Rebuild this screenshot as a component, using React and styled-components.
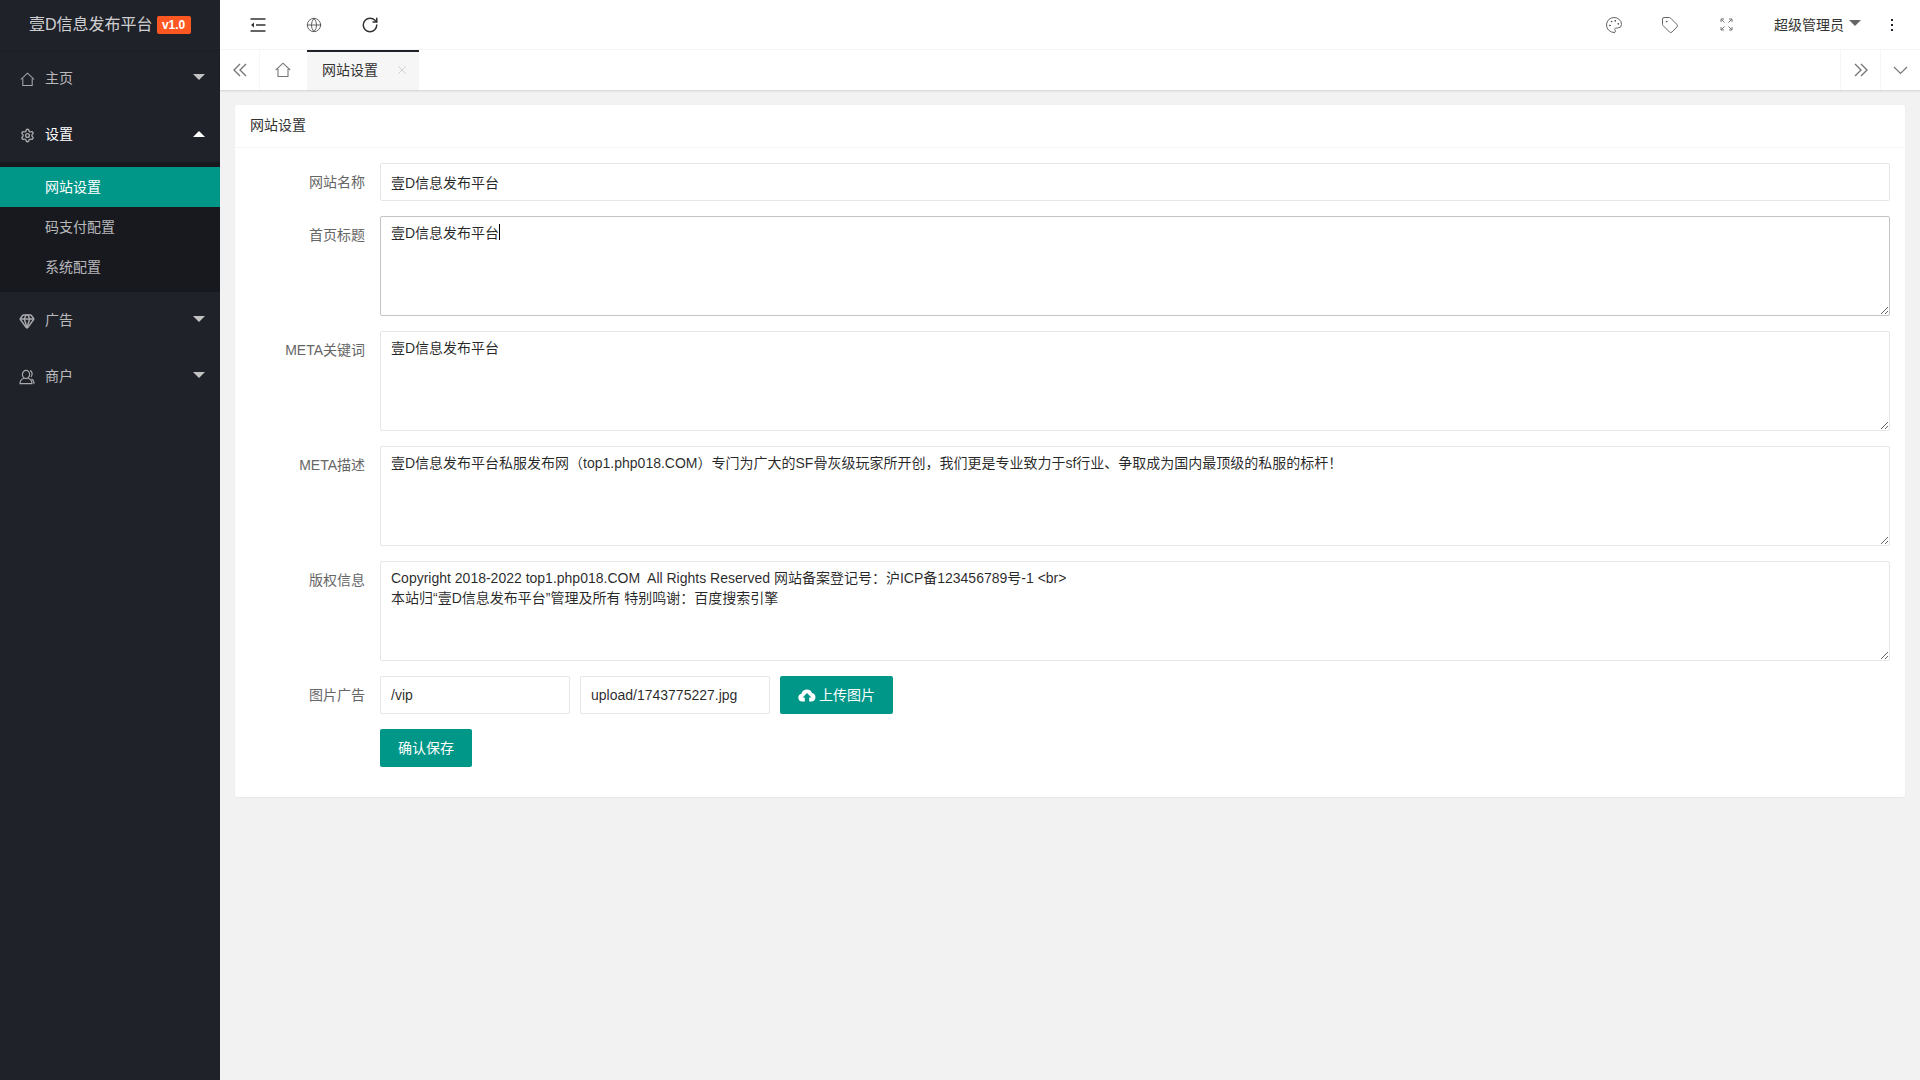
import React, { useEffect, useRef } from "react";
import styled, { createGlobalStyle } from "styled-components";
import { Globe, RotateCw, Palette, Tag, Settings, Gem, X } from "lucide-react";

const GlobalStyle = createGlobalStyle`
  html, body { margin: 0; padding: 0; height: 100%; overflow: hidden; }
  body {
    background: #f2f2f2;
    color: #333;
    font: 14px/20px "Liberation Sans", "Noto Sans CJK SC", sans-serif;
  }
  * { box-sizing: border-box; }
`;

const Layout = styled.div`
  display: flex;
  width: 1920px;
  height: 1080px;
`;

const Sidebar = styled.aside`
  width: 220px;
  flex: none;
  background: #20222a;
`;

const Logo = styled.div`
  height: 50px;
  display: flex;
  align-items: center;
  padding-left: 29px;
  font-size: 16px;
  color: rgba(255, 255, 255, 0.8);
  box-shadow: 0 1px 2px rgba(0, 0, 0, 0.1);
`;

const Badge = styled.span`
  margin-left: 4px;
  width: 34px;
  height: 18px;
  border-radius: 2px;
  background: #ff5722;
  color: #fff;
  font-size: 12px;
  font-weight: bold;
  line-height: 18px;
  text-align: center;
`;

const NavItem = styled.div`
  height: 56px;
  display: flex;
  align-items: center;
  padding-left: 19px;
  gap: 10px;
  color: ${(p) => (p.$open ? "#fff" : "rgba(255, 255, 255, 0.7)")};
  position: relative;
`;

const NavIcon = styled.span`
  width: 16px;
  height: 16px;
  flex: none;
  display: flex;
  align-items: center;
  justify-content: center;
  margin-top: 2px;
  color: #a9aaad;
`;

const Arrow = styled.i`
  position: absolute;
  right: 15px;
  top: 50%;
  margin-top: ${(p) => (p.$up ? "-3px" : "-4px")};
  width: 0;
  height: 0;
  border: 6px solid transparent;
  border-bottom: ${(p) => (p.$up ? "6px solid #fff" : "0")};
  border-top: ${(p) => (p.$up ? "0" : "6px solid #c2c2c2")};
`;

const SubMenu = styled.div`
  background: #18191f;
  padding: 5px 0;
`;

const SubItem = styled.div`
  height: 40px;
  line-height: 40px;
  padding-left: 45px;
  color: ${(p) => (p.$active ? "#fff" : "rgba(255, 255, 255, 0.7)")};
  background: ${(p) => (p.$active ? "#009688" : "transparent")};
`;

const Main = styled.main`
  flex: 1;
  min-width: 0;
  display: flex;
  flex-direction: column;
`;

const Header = styled.header`
  height: 50px;
  flex: none;
  background: #fff;
  display: flex;
  justify-content: space-between;
  padding: 0 8px 0 10px;
  border-bottom: 1px solid #f6f6f6;
`;

const HeaderGroup = styled.div`
  display: flex;
  align-items: center;
`;

const HeaderIcon = styled.div`
  width: ${(p) => p.$w || 56}px;
  height: 50px;
  display: flex;
  align-items: center;
  justify-content: center;
  color: ${(p) => p.$color || "#555"};
`;

const UserName = styled.div`
  width: 118px;
  padding-left: 20px;
  display: flex;
  align-items: center;
  color: #333;
`;

const UserCaret = styled.i`
  margin-left: 5px;
  margin-top: -3px;
  width: 0;
  height: 0;
  border: 6px solid transparent;
  border-bottom: 0;
  border-top: 6px solid #666;
`;

const Dots = styled.span`
  display: flex;
  flex-direction: column;
  gap: 3px;
  i { width: 2px; height: 2px; background: #20222a; display: block; }
`;

const TabBar = styled.div`
  height: 40px;
  flex: none;
  background: #fff;
  display: flex;
  box-shadow: 0 1px 2px rgba(0, 0, 0, 0.14);
  position: relative;
`;

const TabButton = styled.div`
  width: ${(p) => p.$w || 40}px;
  display: flex;
  align-items: center;
  justify-content: center;
  color: #777;
  padding-right: ${(p) => p.$pr || 0}px;
  border-left: ${(p) => (p.$side === "left" ? "1px solid #f6f6f6" : "0")};
  border-right: ${(p) => (p.$side === "right" ? "1px solid #f6f6f6" : "0")};
`;

const Tab = styled.div`
  width: 112px;
  display: flex;
  align-items: center;
  padding: 0 0 2px 15px;
  background: #f6f6f6;
  border-top: 2px solid #20222a;
  color: #333;
  svg { margin-left: 17px; color: #c2c2c2; }
`;

const Spacer = styled.div`
  flex: 1;
`;

const Content = styled.div`
  padding: 15px;
`;

const Card = styled.section`
  background: #fff;
  border-radius: 2px;
  box-shadow: 0 1px 2px rgba(0, 0, 0, 0.05);
`;

const CardHeader = styled.div`
  height: 43px;
  line-height: 41px;
  padding-left: 15px;
  color: #333;
  border-bottom: 1px solid #f6f6f6;
`;

const CardBody = styled.div`
  padding: 15px 15px 30px;
  display: flex;
  flex-direction: column;
  gap: 15px;
`;

const FormRow = styled.div`
  display: flex;
  align-items: flex-start;
`;

const Label = styled.label`
  width: 130px;
  flex: none;
  padding: 9px 15px 9px 0;
  text-align: right;
  color: #666;
`;

const Input = styled.input`
  display: block;
  width: ${(p) => p.$w || "100%"};
  flex: ${(p) => (p.$w ? "none" : "1")};
  height: 38px;
  padding: 0 10px;
  border: 1px solid #e6e6e6;
  border-radius: 2px;
  background: #fff;
  color: rgba(0, 0, 0, 0.85);
  font: inherit;
  outline: none;
`;

const TextArea = styled.textarea`
  display: block;
  flex: 1;
  height: 100px;
  padding: 6px 10px;
  border: 1px solid #e6e6e6;
  border-radius: 2px;
  color: rgba(0, 0, 0, 0.85);
  font: inherit;
  line-height: 20px;
  outline: none;
  resize: vertical;
  &:focus { border-color: #c4c4c4; caret-color: transparent; }
`;

const AreaWrap = styled.div`
  flex: 1;
  display: flex;
  position: relative;
`;

const Caret = styled.span`
  position: absolute;
  left: 119px;
  top: 8px;
  width: 1px;
  height: 16px;
  background: #000;
`;

const InputGroup = styled.div`
  display: flex;
  gap: 10px;
`;

const Button = styled.button`
  height: 38px;
  padding: 0 18px;
  display: flex;
  align-items: center;
  gap: 3px;
  border: 0;
  border-radius: 2px;
  background: #009688;
  color: #fff;
  font: inherit;
  white-space: nowrap;
`;

const SaveRow = styled.div`
  padding-left: 130px;
`;

const Line = ({ w, h, d, sw = 1 }) => (
  <svg width={w} height={h} viewBox={`0 0 ${w} ${h}`} fill="none" stroke="currentColor" strokeWidth={sw}>
    <path d={d} />
  </svg>
);

const HomeIcon = ({ size }) => (
  <svg width={size} height={size} viewBox="0 0 16 16" fill="none" stroke="currentColor" strokeWidth="1.1">
    <path d="M0.8 8 8 1.2 15.2 8M3 7v7.5h10V7" />
  </svg>
);

const UserIcon = () => (
  <svg width="16" height="16" viewBox="0 0 16 16" fill="none" stroke="currentColor" strokeWidth="1.2">
    <ellipse cx="7" cy="5.5" rx="3.6" ry="4.2" />
    <path d="M4.8 9.2C2.5 10 1 11.5 1 14.7h12c0-3.2-1.5-4.7-3.8-5.5M11 1.6c2.2.6 3 4 1 6.3M12.5 10c1.6.7 2.5 2.2 2.5 4.7" />
  </svg>
);

const ListIcon = () => (
  <svg width="16" height="14" viewBox="0 0 16 14" fill="none" stroke="currentColor" strokeWidth="1.4">
    <path d="M0.5 1h15M6 7h9.5M0.5 13h15" />
    <path d="M4 4.5 1 7l3 2.5z" fill="currentColor" stroke="none" />
  </svg>
);

const ExpandIcon = () => (
  <svg width="13" height="13" viewBox="0 0 13 13" fill="none" stroke="#777" strokeWidth="1">
    <path d="M1 4V1h3M1 1l3.5 3.5M12 4V1H9M12 1 8.5 4.5M1 9v3h3M1 12l3.5-3.5M12 9v3H9M12 12 8.5 8.5" />
  </svg>
);

const CloudIcon = () => (
  <svg width="18" height="14" viewBox="0 0 18 14" fill="#fff">
    <path d="M4 13.5a3.9 3.9 0 0 1-.6-7.7A5.6 5.6 0 0 1 14 4.9a4.4 4.4 0 0 1 0 8.6h-2.8V9.6h2.2L9 4.9 4.6 9.6h2.2v3.9z" />
  </svg>
);

const textareas = [
  { label: "首页标题", value: "壹D信息发布平台", focus: true },
  { label: "META关键词", value: "壹D信息发布平台" },
  {
    label: "META描述",
    value: "壹D信息发布平台私服发布网（top1.php018.COM）专门为广大的SF骨灰级玩家所开创，我们更是专业致力于sf行业、争取成为国内最顶级的私服的标杆！",
  },
  {
    label: "版权信息",
    value: "Copyright 2018-2022 top1.php018.COM  All Rights Reserved 网站备案登记号：沪ICP备123456789号-1 <br>\n本站归“壹D信息发布平台”管理及所有 特别鸣谢：百度搜索引擎",
  },
];

const FocusedArea = ({ value }) => {
  const ref = useRef(null);
  useEffect(() => {
    ref.current.focus();
  }, []);
  return (
    <AreaWrap>
      <TextArea ref={ref} defaultValue={value} />
      <Caret />
    </AreaWrap>
  );
};

const App = () => (
  <Layout>
    <GlobalStyle />
    <Sidebar>
      <Logo>
        壹D信息发布平台<Badge>v1.0</Badge>
      </Logo>
      <NavItem>
        <NavIcon><HomeIcon size={15} /></NavIcon>主页<Arrow />
      </NavItem>
      <NavItem $open>
        <NavIcon><Settings size={15} strokeWidth={2.2} /></NavIcon>设置<Arrow $up />
      </NavItem>
      <SubMenu>
        <SubItem $active>网站设置</SubItem>
        <SubItem>码支付配置</SubItem>
        <SubItem>系统配置</SubItem>
      </SubMenu>
      <NavItem>
        <NavIcon><Gem size={16} strokeWidth={2.2} /></NavIcon>广告<Arrow />
      </NavItem>
      <NavItem>
        <NavIcon><UserIcon /></NavIcon>商户<Arrow />
      </NavItem>
    </Sidebar>
    <Main>
      <Header>
        <HeaderGroup>
          <HeaderIcon $color="#333"><ListIcon /></HeaderIcon>
          <HeaderIcon><Globe size={16} strokeWidth={1.4} /></HeaderIcon>
          <HeaderIcon $color="#333"><RotateCw size={18} strokeWidth={2} /></HeaderIcon>
        </HeaderGroup>
        <HeaderGroup>
          <HeaderIcon><Palette size={18} strokeWidth={1.2} /></HeaderIcon>
          <HeaderIcon><Tag size={18} strokeWidth={1.2} /></HeaderIcon>
          <HeaderIcon><ExpandIcon /></HeaderIcon>
          <UserName>超级管理员<UserCaret /></UserName>
          <HeaderIcon $w={40}><Dots><i /><i /><i /></Dots></HeaderIcon>
        </HeaderGroup>
      </Header>
      <TabBar>
        <TabButton $side="right"><Line w={14} h={14} sw={1.4} d="M7 1 1 7l6 6M13 1 7 7l6 6" /></TabButton>
        <TabButton $w={47} $pr={1}><HomeIcon size={16} /></TabButton>
        <Tab>网站设置<X size={14} strokeWidth={1.2} /></Tab>
        <Spacer />
        <TabButton $side="left"><Line w={14} h={14} sw={1.4} d="M1 1l6 6-6 6M7 1l6 6-6 6" /></TabButton>
        <TabButton $side="left"><Line w={15} h={9} sw={1.2} d="M1 1l6.5 6.5L14 1" /></TabButton>
      </TabBar>
      <Content>
        <Card>
          <CardHeader>网站设置</CardHeader>
          <CardBody>
            <FormRow>
              <Label>网站名称</Label>
              <Input defaultValue="壹D信息发布平台" />
            </FormRow>
            {textareas.map((t) => (
              <FormRow key={t.label}>
                <Label>{t.label}</Label>
                {t.focus ? <FocusedArea value={t.value} /> : <TextArea defaultValue={t.value} />}
              </FormRow>
            ))}
            <FormRow>
              <Label>图片广告</Label>
              <InputGroup>
                <Input $w="190px" defaultValue="/vip" />
                <Input $w="190px" defaultValue="upload/1743775227.jpg" />
                <Button><CloudIcon />上传图片</Button>
              </InputGroup>
            </FormRow>
            <SaveRow>
              <Button>确认保存</Button>
            </SaveRow>
          </CardBody>
        </Card>
      </Content>
    </Main>
  </Layout>
);

export default App;
